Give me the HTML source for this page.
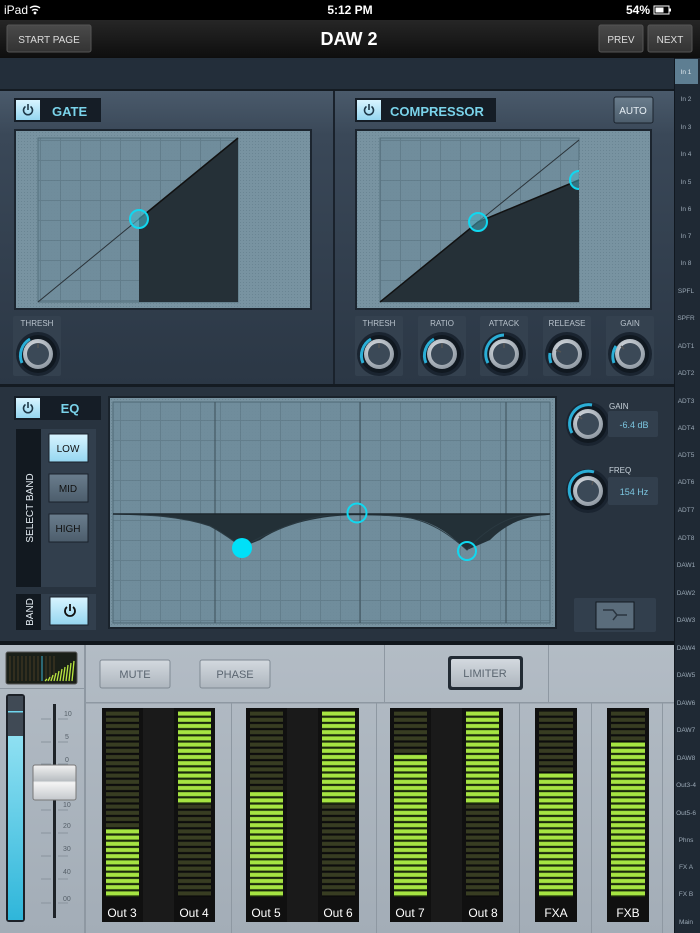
<!DOCTYPE html>
<html><head><meta charset="utf-8"><style>
html,body{margin:0;padding:0;background:#000;width:700px;height:933px;overflow:hidden}
svg{display:block}
text{font-family:"Liberation Sans",sans-serif}
</style></head><body>
<svg width="700" height="933" viewBox="0 0 700 933" xmlns="http://www.w3.org/2000/svg">
<defs>
<pattern id="grid" x="0" y="0" width="20" height="20" patternUnits="userSpaceOnUse">
<rect width="20" height="20" fill="#6f8c9b"/>
<path d="M0 0.5H20M0.5 0V20" stroke="#5f7a88" stroke-width="1"/>
<path d="M0 10.5H20M10.5 0V20" stroke="#68849300" stroke-width="1"/>
</pattern>
<pattern id="dots" x="0" y="0" width="3" height="3" patternUnits="userSpaceOnUse">
<rect width="3" height="3" fill="#7893a1"/><rect width="1" height="1" fill="#6a8593"/>
</pattern>
<pattern id="segD" x="0" y="711" width="10" height="6.2" patternUnits="userSpaceOnUse">
<rect width="10" height="6.2" fill="#0c0c0c"/><rect y="0.6" width="10" height="4" fill="#383d22"/>
</pattern>
<pattern id="segL" x="0" y="711" width="10" height="6.2" patternUnits="userSpaceOnUse">
<rect width="10" height="6.2" fill="#1b2a0c"/><rect y="0.6" width="10" height="4" fill="#a6e542"/>
</pattern>
<linearGradient id="hdr" x1="0" y1="0" x2="0" y2="1"><stop offset="0" stop-color="#262626"/><stop offset="1" stop-color="#0e0e0e"/></linearGradient>
<linearGradient id="btn" x1="0" y1="0" x2="0" y2="1"><stop offset="0" stop-color="#4a4a4a"/><stop offset="1" stop-color="#333"/></linearGradient>
<linearGradient id="top" x1="0" y1="0" x2="0" y2="1"><stop offset="0" stop-color="#4a5a6b"/><stop offset="0.15" stop-color="#3a4858"/><stop offset="1" stop-color="#2b3745"/></linearGradient>
<linearGradient id="bot" x1="0" y1="0" x2="0" y2="1"><stop offset="0" stop-color="#b3bcc5"/><stop offset="1" stop-color="#a3adb7"/></linearGradient>
<linearGradient id="lbtn" x1="0" y1="0" x2="0" y2="1"><stop offset="0" stop-color="#d3d9df"/><stop offset="1" stop-color="#aeb6be"/></linearGradient>
<linearGradient id="bluebtn" x1="0" y1="0" x2="0" y2="1"><stop offset="0" stop-color="#d8f4ff"/><stop offset="1" stop-color="#95d6f0"/></linearGradient>
<linearGradient id="greybtn" x1="0" y1="0" x2="0" y2="1"><stop offset="0" stop-color="#6a7d8d"/><stop offset="1" stop-color="#4c5d6c"/></linearGradient>
<linearGradient id="cap" x1="0" y1="0" x2="0" y2="1"><stop offset="0" stop-color="#f2f2f2"/><stop offset="0.45" stop-color="#b9bec2"/><stop offset="0.5" stop-color="#f5f5f5"/><stop offset="1" stop-color="#c4c8cc"/></linearGradient>
<linearGradient id="bluem" x1="0" y1="0" x2="0" y2="1"><stop offset="0" stop-color="#8fe0f2"/><stop offset="1" stop-color="#2fb6da"/></linearGradient>
<radialGradient id="knob" cx="0.4" cy="0.35" r="0.7"><stop offset="0" stop-color="#e2e6ea"/><stop offset="1" stop-color="#8c96a0"/></radialGradient>
<g id="kn">
<circle r="22" fill="#1a2430"/>
<circle r="19" fill="#101820"/>
<circle r="15" fill="url(#knob)"/>
<circle r="11" fill="#3b4957"/>
</g>
</defs>

<!-- status bar -->
<rect width="700" height="20" fill="#000"/>
<text x="4" y="14" font-size="12" fill="#fff">iPad</text>
<path d="M30 8a8 8 0 0 1 10 0M32 10.5a5 5 0 0 1 6 0" stroke="#fff" stroke-width="1.4" fill="none"/><circle cx="35" cy="13" r="1.4" fill="#fff"/>
<text x="350" y="14" font-size="12" font-weight="bold" fill="#fff" text-anchor="middle">5:12 PM</text>
<text x="650" y="14" font-size="12" font-weight="bold" fill="#fff" text-anchor="end">54%</text>
<rect x="654" y="6" width="15" height="8" fill="none" stroke="#fff"/><rect x="655.5" y="7.5" width="8" height="5" fill="#fff"/><rect x="669" y="8.5" width="2" height="3" fill="#fff"/>

<!-- header -->
<rect y="20" width="700" height="38" fill="url(#hdr)"/>
<rect x="7" y="25" width="84" height="27" rx="2" fill="url(#btn)" stroke="#555"/>
<text x="49" y="43" font-size="10" fill="#ddd" text-anchor="middle">START PAGE</text>
<text x="349" y="45" font-size="18" font-weight="bold" fill="#fff" text-anchor="middle">DAW 2</text>
<rect x="599" y="25" width="44" height="27" rx="2" fill="url(#btn)" stroke="#555"/>
<text x="621" y="43" font-size="10" fill="#ddd" text-anchor="middle">PREV</text>
<rect x="648" y="25" width="44" height="27" rx="2" fill="url(#btn)" stroke="#555"/>
<text x="670" y="43" font-size="10" fill="#ddd" text-anchor="middle">NEXT</text>

<!-- band -->
<rect y="58" width="674" height="32" fill="#232e3a"/>
<rect y="89" width="674" height="2" fill="#141b22"/>

<!-- top panels -->
<rect y="91" width="333" height="294" fill="url(#top)"/>
<rect x="333" y="91" width="2" height="294" fill="#1a222c"/>
<rect x="335" y="91" width="339" height="294" fill="url(#top)"/>
<rect y="384" width="674" height="3" fill="#141b22"/>

<!-- gate header -->
<rect x="14" y="98" width="87" height="24" fill="#151d26"/>
<rect x="16" y="100" width="24" height="20" fill="url(#bluebtn)"/>
<path d="M25.5 106.5a4.5 4.5 0 1 0 5 0M28 104v6" stroke="#1e3848" stroke-width="1.6" fill="none"/>
<text x="52" y="116" font-size="13" font-weight="bold" fill="#7ad3ea">GATE</text>

<!-- gate graph -->
<rect x="14" y="129" width="298" height="181" fill="#1c252f"/>
<rect x="16" y="131" width="294" height="177" fill="url(#dots)"/>
<rect x="38" y="138" width="200" height="164" fill="url(#grid)" opacity="0.9"/>
<rect x="38" y="138" width="200" height="164" fill="none" stroke="#55707d"/>
<polygon points="139,219 238,138 238,302 139,302" fill="#253037"/>
<line x1="38" y1="302" x2="139" y2="219" stroke="#2a3238"/>
<line x1="139" y1="219" x2="238" y2="138" stroke="#111" stroke-width="1.5"/>
<circle cx="139" cy="219" r="9" fill="#49b8cc" fill-opacity="0.6" stroke="#10d8f0" stroke-width="2"/>

<!-- gate thresh -->
<rect x="13" y="316" width="48" height="60" rx="2" fill="#34414f"/>
<text x="37" y="326" font-size="8" fill="#b8c2cc" text-anchor="middle">THRESH</text>
<use href="#kn" x="38" y="354"/>
<path d="M22 363a19 19 0 0 1 8 -24" stroke="#2aaed6" stroke-width="3" fill="none"/>
<line x1="38" y1="343" x2="38" y2="348" stroke="#555" stroke-width="1.5"/>

<!-- compressor header -->
<rect x="355" y="98" width="141" height="24" fill="#151d26"/>
<rect x="357" y="100" width="24" height="20" fill="url(#bluebtn)"/>
<path d="M366.5 106.5a4.5 4.5 0 1 0 5 0M369 104v6" stroke="#1e3848" stroke-width="1.6" fill="none"/>
<text x="390" y="116" font-size="13" font-weight="bold" fill="#7ad3ea">COMPRESSOR</text>
<rect x="614" y="97" width="39" height="26" rx="2" fill="url(#greybtn)" stroke="#1a222c"/>
<text x="633" y="114" font-size="10" fill="#e6eef4" text-anchor="middle">AUTO</text>

<!-- comp graph -->
<rect x="355" y="129" width="297" height="181" fill="#1c252f"/>
<rect x="357" y="131" width="293" height="177" fill="url(#dots)"/>
<rect x="380" y="138" width="199" height="164" fill="url(#grid)" opacity="0.9"/>
<rect x="380" y="138" width="199" height="164" fill="none" stroke="#55707d"/>
<polygon points="380,302 478,222 579,180 579,302" fill="#253037"/>
<line x1="478" y1="222" x2="579" y2="140" stroke="#2a3238"/>
<polyline points="380,302 478,222 579,180" fill="none" stroke="#111" stroke-width="1.5"/>
<circle cx="478" cy="222" r="9" fill="#49b8cc" fill-opacity="0.5" stroke="#10d8f0" stroke-width="2"/>
<circle cx="579" cy="180" r="9" fill="#49b8cc" fill-opacity="0.5" stroke="#10d8f0" stroke-width="2"/>
<rect x="579" y="160" width="12" height="40" fill="url(#dots)"/>

<!-- comp knobs -->
<g font-size="8" fill="#b8c2cc" text-anchor="middle">
<rect x="355" y="316" width="48" height="60" rx="2" fill="#34414f"/><text x="379" y="326">THRESH</text>
<rect x="418" y="316" width="48" height="60" rx="2" fill="#34414f"/><text x="442" y="326">RATIO</text>
<rect x="480" y="316" width="48" height="60" rx="2" fill="#34414f"/><text x="504" y="326">ATTACK</text>
<rect x="543" y="316" width="48" height="60" rx="2" fill="#34414f"/><text x="567" y="326">RELEASE</text>
<rect x="606" y="316" width="48" height="60" rx="2" fill="#34414f"/><text x="630" y="326">GAIN</text>
</g>
<use href="#kn" x="379" y="354"/><path d="M363 363a19 19 0 0 1 8 -24" stroke="#2aaed6" stroke-width="3" fill="none"/><line x1="379" y1="343" x2="379" y2="348" stroke="#555" stroke-width="1.5"/>
<use href="#kn" x="442" y="354"/><path d="M426 363a19 19 0 0 1 8 -24" stroke="#2aaed6" stroke-width="3" fill="none"/><line x1="442" y1="343" x2="442" y2="348" stroke="#555" stroke-width="1.5"/>
<use href="#kn" x="504" y="354"/><path d="M488 363a19 19 0 0 1 16 -28" stroke="#2aaed6" stroke-width="3" fill="none"/><line x1="504" y1="343" x2="504" y2="348" stroke="#555" stroke-width="1.5"/>
<use href="#kn" x="567" y="354"/><path d="M551 363a19 19 0 0 1 -1 -10" stroke="#2aaed6" stroke-width="3" fill="none"/><line x1="556" y1="350" x2="561" y2="352" stroke="#555" stroke-width="1.5"/>
<use href="#kn" x="630" y="354"/><path d="M614 363a19 19 0 0 1 2 -17" stroke="#2aaed6" stroke-width="3" fill="none"/><line x1="621" y1="346" x2="624" y2="349" stroke="#555" stroke-width="1.5"/>

<!-- EQ section -->
<rect y="387" width="674" height="256" fill="#28333f"/>
<rect y="641" width="674" height="4" fill="#10161c"/>
<rect x="14" y="396" width="87" height="24" fill="#151d26"/>
<rect x="16" y="398" width="24" height="20" fill="url(#bluebtn)"/>
<path d="M25.5 404.5a4.5 4.5 0 1 0 5 0M28 402v6" stroke="#1e3848" stroke-width="1.6" fill="none"/>
<text x="70" y="413" font-size="13" font-weight="bold" fill="#7ad3ea" text-anchor="middle">EQ</text>

<rect x="16" y="429" width="80" height="158" fill="#323f4d"/>
<rect x="16" y="429" width="25" height="158" fill="#121920"/>
<text transform="translate(33,508) rotate(-90)" font-size="10" fill="#e6eef4" text-anchor="middle">SELECT BAND</text>
<rect x="49" y="434" width="39" height="28" fill="url(#bluebtn)" stroke="#1a222c"/>
<text x="68" y="452" font-size="10" fill="#111" text-anchor="middle">LOW</text>
<rect x="49" y="474" width="39" height="28" fill="url(#greybtn)" stroke="#1a222c"/>
<text x="68" y="492" font-size="10" fill="#111" text-anchor="middle">MID</text>
<rect x="49" y="514" width="39" height="28" fill="url(#greybtn)" stroke="#1a222c"/>
<text x="68" y="532" font-size="10" fill="#111" text-anchor="middle">HIGH</text>
<rect x="16" y="594" width="80" height="36" fill="#323f4d"/>
<rect x="16" y="594" width="25" height="36" fill="#121920"/>
<text transform="translate(33,612) rotate(-90)" font-size="10" fill="#e6eef4" text-anchor="middle">BAND</text>
<rect x="50" y="597" width="38" height="28" fill="url(#bluebtn)" stroke="#1a222c"/>
<path d="M67 607a5 5 0 1 0 6 0M70 604v7" stroke="#111" stroke-width="1.8" fill="none"/>

<!-- EQ graph -->
<rect x="108" y="396" width="449" height="233" fill="#1a232c"/>
<rect x="110" y="398" width="445" height="229" fill="url(#dots)"/>
<rect x="113" y="402" width="437" height="221" fill="url(#grid)" opacity="0.85"/>
<rect x="113" y="402" width="437" height="221" fill="none" stroke="#4e6875"/>
<line x1="215" y1="402" x2="215" y2="623" stroke="#3c4f59"/>
<line x1="360" y1="402" x2="360" y2="623" stroke="#3c4f59"/>
<line x1="506" y1="402" x2="506" y2="623" stroke="#3c4f59"/>
<path d="M113 514 H550 L548 515 C530 516 510 520 490 540 L467 550 C455 540 445 528 420 520 C400 516 380 515 360 515 C330 515 290 520 260 540 L242 547 C232 540 225 534 210 526 C180 516 150 515 130 514 Z" fill="#233037"/>
<path d="M113 514 C150 515 180 516 210 526 C225 534 232 540 242 547 C255 540 290 520 330 515 C345 514 380 515 400 516 C430 520 450 535 467 550 C480 535 500 520 520 516 C535 515 545 515 550 514" fill="none" stroke="#2b3a42" stroke-width="1"/>
<line x1="113" y1="514" x2="550" y2="514" stroke="#1d272d" stroke-width="1.5"/>
<circle cx="242" cy="548" r="10" fill="#00e0f8"/>
<circle cx="357" cy="513" r="9.5" fill="none" stroke="#10d8f0" stroke-width="2"/>
<circle cx="467" cy="551" r="9" fill="none" stroke="#10d8f0" stroke-width="2"/>

<!-- EQ right -->
<use href="#kn" x="588" y="424"/><path d="M572 433a19 19 0 0 1 20 -28" stroke="#2aaed6" stroke-width="3" fill="none"/><line x1="579" y1="416" x2="582" y2="419" stroke="#555" stroke-width="1.5"/>
<text x="609" y="409" font-size="8" fill="#c8d2da">GAIN</text>
<rect x="608" y="411" width="50" height="26" rx="2" fill="#323f4d"/>
<text x="634" y="428" font-size="9" fill="#7cc6e0" text-anchor="middle">-6.4 dB</text>
<use href="#kn" x="588" y="491"/><path d="M572 500a19 19 0 0 1 22 -28" stroke="#2aaed6" stroke-width="3" fill="none"/><line x1="593" y1="481" x2="592" y2="485" stroke="#555" stroke-width="1.5"/>
<text x="609" y="473" font-size="8" fill="#c8d2da">FREQ</text>
<rect x="608" y="477" width="50" height="28" rx="2" fill="#323f4d"/>
<text x="634" y="495" font-size="9" fill="#7cc6e0" text-anchor="middle">154 Hz</text>
<rect x="574" y="598" width="82" height="34" rx="2" fill="#323f4d"/>
<rect x="596" y="602" width="38" height="27" fill="#5a6c7b" stroke="#121920"/>
<path d="M603 610h10l4 5h10M613 620l4-5" stroke="#2a3540" stroke-width="1.5" fill="none"/>

<!-- bottom section -->
<rect y="645" width="674" height="288" fill="url(#bot)"/>
<rect x="84" y="645" width="2" height="288" fill="#8e98a2"/>
<rect x="0" y="688" width="84" height="1" fill="#8e98a2"/>
<rect x="86" y="702" width="588" height="1.5" fill="#8e98a2"/>
<rect x="384" y="645" width="1" height="57" fill="#8e98a2"/>
<rect x="548" y="645" width="1" height="57" fill="#8e98a2"/>
<rect x="231" y="703" width="1" height="230" fill="#8e98a2"/>
<rect x="519" y="703" width="1" height="230" fill="#8e98a2"/>
<rect x="591" y="703" width="1" height="230" fill="#8e98a2"/>
<rect x="376" y="703" width="1" height="230" fill="#8e98a2"/>
<rect x="662" y="703" width="1" height="230" fill="#8e98a2"/>

<!-- mini meter -->
<rect x="6" y="652" width="71" height="32" rx="2" fill="#1a1f18" stroke="#555"/>
<path d="M10 656v25M14 656v25M18 656v25M22 656v25M26 656v25M30 656v25M34 656v25M38 656v25M46 656v25M50 656v25M54 656v25" stroke="#4a3d25" stroke-width="1"/>
<line x1="42" y1="656" x2="42" y2="681" stroke="#3cb0d0"/>
<path d="M45 681l2-2M48 681l2-4M51 681l2-6M54 681l2-8M57 681l2-10M60 681l2-12M63 681l2-14M66 681l2-16M69 681l2-18M72 681l2-20" stroke="#b8e640" stroke-width="1.3"/>

<!-- blue meter -->
<rect x="6" y="694" width="19" height="228" rx="3" fill="#1c2128"/>
<rect x="8" y="696" width="15" height="40" fill="#404a55"/>
<rect x="8" y="711" width="15" height="1.5" fill="#6fd6ee"/>
<rect x="8" y="736" width="15" height="184" fill="url(#bluem)"/>

<!-- fader -->
<rect x="53" y="704" width="3" height="214" fill="#1e2328"/>
<g stroke="#8a949e" stroke-width="1">
<path d="M41 719h10M58 719h10M41 742h10M58 742h10M41 764h10M58 764h10M41 787h10M58 787h10M41 810h10M58 810h10M41 833h10M58 833h10M41 856h10M58 856h10M41 879h10M58 879h10M41 903h10M58 903h10"/>
</g>
<g font-size="7" fill="#555f68">
<text x="64" y="716">10</text><text x="65" y="739">5</text><text x="65" y="762">0</text><text x="63" y="807">10</text><text x="63" y="828">20</text><text x="63" y="851">30</text><text x="63" y="874">40</text><text x="63" y="901">00</text>
</g>
<rect x="33" y="765" width="43" height="35" rx="2" fill="url(#cap)" stroke="#777"/>

<!-- buttons -->
<rect x="100" y="660" width="70" height="28" rx="2" fill="url(#lbtn)" stroke="#7f8993"/>
<text x="135" y="678" font-size="11" fill="#5a6570" text-anchor="middle">MUTE</text>
<rect x="200" y="660" width="70" height="28" rx="2" fill="url(#lbtn)" stroke="#7f8993"/>
<text x="235" y="678" font-size="11" fill="#5a6570" text-anchor="middle">PHASE</text>
<rect x="448" y="656" width="75" height="34" rx="3" fill="#222b34"/>
<rect x="451" y="659" width="69" height="28" rx="2" fill="url(#lbtn)"/>
<text x="485" y="677" font-size="11" fill="#5a6570" text-anchor="middle">LIMITER</text>

<!-- meters -->
<rect x="102" y="708" width="113" height="214" fill="#101010"/>
<rect x="246" y="708" width="113" height="214" fill="#101010"/>
<rect x="390" y="708" width="113" height="214" fill="#101010"/>
<rect x="535" y="708" width="42" height="214" fill="#101010"/>
<rect x="607" y="708" width="42" height="214" fill="#101010"/>
<rect x="143" y="708" width="31" height="214" fill="#1a1a1a"/>
<rect x="287" y="708" width="31" height="214" fill="#1a1a1a"/>
<rect x="431" y="708" width="31" height="214" fill="#1a1a1a"/>

<rect x="106" y="711" width="33" height="186" fill="url(#segD)"/>
<rect x="106" y="828.8" width="33" height="68.2" fill="url(#segL)"/>
<rect x="178" y="711" width="33" height="186" fill="url(#segD)"/>
<rect x="178" y="711" width="33" height="93" fill="url(#segL)"/>
<rect x="250" y="711" width="33" height="186" fill="url(#segD)"/>
<rect x="250" y="791.6" width="33" height="105.4" fill="url(#segL)"/>
<rect x="322" y="711" width="33" height="186" fill="url(#segD)"/>
<rect x="322" y="711" width="33" height="93" fill="url(#segL)"/>
<rect x="394" y="711" width="33" height="186" fill="url(#segD)"/>
<rect x="394" y="754.4" width="33" height="142.6" fill="url(#segL)"/>
<rect x="466" y="711" width="33" height="186" fill="url(#segD)"/>
<rect x="466" y="711" width="33" height="93" fill="url(#segL)"/>
<rect x="539" y="711" width="34" height="186" fill="url(#segD)"/>
<rect x="539" y="773" width="34" height="124" fill="url(#segL)"/>
<rect x="611" y="711" width="34" height="186" fill="url(#segD)"/>
<rect x="611" y="742" width="34" height="155" fill="url(#segL)"/>

<g font-size="12" fill="#fff" text-anchor="middle">
<text x="122" y="917">Out 3</text><text x="194" y="917">Out 4</text>
<text x="266" y="917">Out 5</text><text x="338" y="917">Out 6</text>
<text x="410" y="917">Out 7</text><text x="483" y="917">Out 8</text>
<text x="556" y="917">FXA</text><text x="628" y="917">FXB</text>
</g>

<!-- sidebar -->
<rect x="674" y="58" width="26" height="875" fill="#1f2934"/>
<rect x="674" y="58" width="1" height="875" fill="#111820"/>
<rect x="675" y="59" width="23" height="25" fill="#5e7e92"/>
<g font-size="6.5" fill="#9aa8b5" text-anchor="middle">
<text x="686" y="74" fill="#dfe8ee">In 1</text><text x="686" y="101">In 2</text><text x="686" y="129">In 3</text><text x="686" y="156">In 4</text><text x="686" y="184">In 5</text><text x="686" y="211">In 6</text><text x="686" y="238">In 7</text><text x="686" y="265">In 8</text><text x="686" y="293">SPFL</text><text x="686" y="320">SPFR</text><text x="686" y="348">ADT1</text><text x="686" y="375">ADT2</text><text x="686" y="403">ADT3</text><text x="686" y="430">ADT4</text><text x="686" y="457">ADT5</text><text x="686" y="484">ADT6</text><text x="686" y="512">ADT7</text><text x="686" y="540">ADT8</text><text x="686" y="567">DAW1</text><text x="686" y="595">DAW2</text><text x="686" y="622">DAW3</text><text x="686" y="650">DAW4</text><text x="686" y="677">DAW5</text><text x="686" y="705">DAW6</text><text x="686" y="732">DAW7</text><text x="686" y="760">DAW8</text><text x="686" y="787">Out3-4</text><text x="686" y="815">Out5-6</text><text x="686" y="842">Phns</text><text x="686" y="869">FX A</text><text x="686" y="896">FX B</text><text x="686" y="924">Main</text>
</g>
</svg>
</body></html>
